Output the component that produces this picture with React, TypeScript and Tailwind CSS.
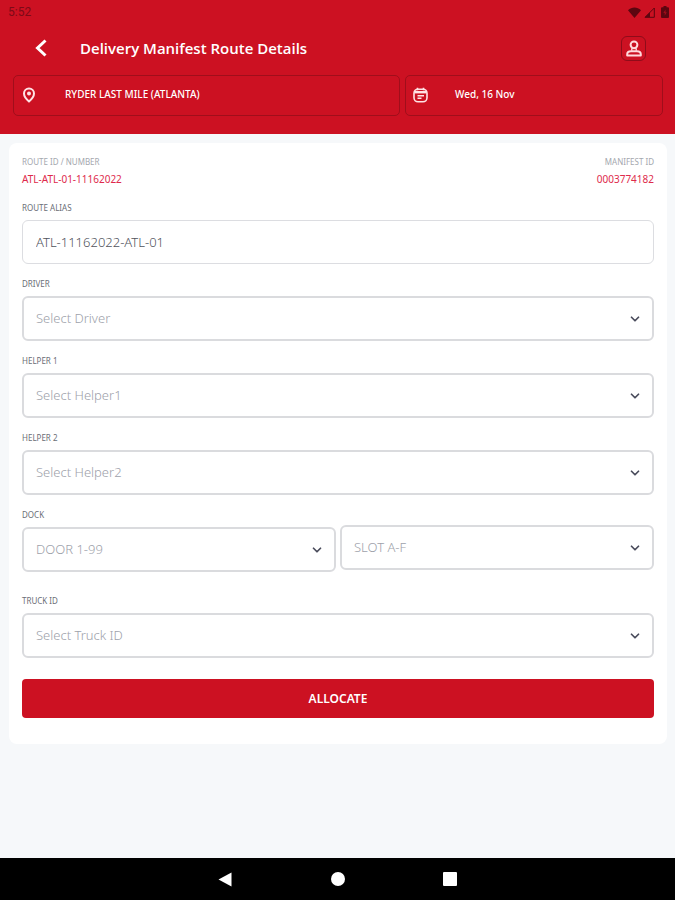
import { useState } from "react";
import { ChevronDown } from "lucide-react";

interface SelectBoxProps {
  id: string;
  placeholder: string;
  options: string[];
  label?: string;
}

const drivers = ["Driver 1", "Driver 2", "Driver 3"];
const helpers = ["Helper 1", "Helper 2", "Helper 3"];
const doors = Array.from({ length: 99 }, (_, i) => `DOOR ${i + 1}`);
const slots = ["SLOT A", "SLOT B", "SLOT C", "SLOT D", "SLOT E", "SLOT F"];
const trucks = ["Truck 1", "Truck 2"];

const labelClass = "block text-[8px] leading-4 text-[#6b6e76]";

function SelectBox({ id, placeholder, options, label }: SelectBoxProps) {
  const [value, setValue] = useState("");

  return (
    <div className="relative">
      <select
        id={id}
        aria-label={label}
        value={value}
        onChange={(e) => setValue(e.target.value)}
        className="block h-[45px] w-full appearance-none rounded-md border-2 border-[#dadbde] bg-white pr-10 pl-3 text-[13px] font-light text-[#9da1aa]"
      >
        <option value="">{placeholder}</option>
        {options.map((option) => (
          <option key={option} value={option}>
            {option}
          </option>
        ))}
      </select>
      <ChevronDown className="pointer-events-none absolute top-4 right-3 size-3.5 text-[#4a4c5c]" strokeWidth={3} />
    </div>
  );
}

function StatusBar() {
  return (
    <div className="flex h-6 items-center justify-between pr-[3px] pl-2 text-[#5c0610]">
      <span className="font-[Roboto,sans-serif] text-xs text-[#7d0a17]">5:52</span>
      <div className="flex items-center gap-[3px]">
        <svg width="13" height="11" viewBox="0 0 13 11" fill="currentColor">
          <path d="M0 3.2C3.8-.4 9.2-.4 13 3.2L6.5 11z" />
        </svg>
        <svg width="11" height="11" viewBox="0 0 11 11">
          <path d="M10.3 1v9.3H1z" fill="none" stroke="currentColor" strokeWidth="1" />
          <path d="M6 5.2v5.1H1z" fill="currentColor" />
        </svg>
        <svg width="14" height="12" viewBox="0 0 14 12">
          <path d="M5.5 0h3v1.2H10a1 1 0 0 1 1 1V11a1 1 0 0 1-1 1H4a1 1 0 0 1-1-1V2.2a1 1 0 0 1 1-1h1.5z" fill="currentColor" />
          <path d="M7.5 3.5 5.3 7h1.4v2.7L8.8 6.2H7.5z" fill="#a00d1b" />
        </svg>
      </div>
    </div>
  );
}

export default function App() {
  const [alias, setAlias] = useState("ATL-11162022-ATL-01");

  return (
    <div className="flex min-h-screen flex-col bg-[#f6f8fa] font-['Noto_Sans','Open_Sans',sans-serif]">
      <header className="bg-[#cc1122] pb-[18px] text-white">
        <StatusBar />

        <div className="mb-[3px] flex h-12 items-center pr-[29px] pl-[34px]">
          <button type="button" aria-label="Back" className="flex h-6 w-[46px] items-center">
            <svg width="14" height="18" viewBox="0 0 14 18" fill="none" stroke="currentColor" strokeWidth="3">
              <path d="M11.5 1.5 3.5 9l8 7.5" />
            </svg>
          </button>
          <h1 className="flex-1 font-['Open_Sans',sans-serif] text-[15px] leading-6 font-semibold">
            Delivery Manifest Route Details
          </h1>
          <button
            type="button"
            aria-label="Profile"
            className="flex size-[25px] items-center justify-center rounded-md border border-[#8f0c1a]"
          >
            <svg width="16" height="17" viewBox="0 0 16 17" fill="none" stroke="#ffd9dc" strokeWidth="2">
              <circle cx="8" cy="4.8" r="3.4" />
              <path d="M5.8 8.2v2.6M10.2 8.2v2.6" strokeWidth="1.4" />
              <path d="M1.2 15.5v-1.2c0-2 1.6-3.1 3.8-3.1h6c2.2 0 3.8 1.1 3.8 3.1v1.2z" strokeLinejoin="round" />
            </svg>
          </button>
        </div>

        <div className="grid grid-cols-[3fr_2fr] gap-[5px] pr-3 pl-[13px]">
          <button
            type="button"
            className="flex h-[41px] items-center rounded-[5px] border border-[#a00e1b] pb-0.5 pl-2 text-left text-[10px] font-medium"
          >
            <span className="w-[43px]">
              <svg width="14" height="16" viewBox="0 0 14 16" fill="none" stroke="#ffe3e5" strokeWidth="2">
                <path d="M7 14.5C4 12 2 9.4 2 6.6a5 5 0 0 1 10 0c0 2.8-2 5.4-5 7.9z" />
                <circle cx="7" cy="6.6" r="1" />
              </svg>
            </span>
            RYDER LAST MILE (ATLANTA)
          </button>
          <button
            type="button"
            className="flex h-[41px] items-center rounded-[5px] border border-[#a00e1b] pb-0.5 pl-[7px] text-left text-[10px] font-medium"
          >
            <span className="w-[42px]">
              <svg width="15" height="16" viewBox="0 0 15 16" fill="none" stroke="#ffe3e5" strokeWidth="1.6">
                <rect x="1" y="2.2" width="13" height="12.6" rx="4" />
                <path d="M1.5 5.2h12" strokeWidth="2.4" />
                <path d="M4.5.8v2.5M10.5.8v2.5M4.5 8.7H11M4.5 11.3h4" />
              </svg>
            </span>
            Wed, 16 Nov
          </button>
        </div>
      </header>

      <main className="flex-1 pt-[9px] pr-2 pl-[9px]">
        <form
          onSubmit={(e) => e.preventDefault()}
          className="flex flex-col gap-3 rounded-lg bg-white px-[13px] pt-[11px] pb-[26px]"
        >
          <div className="flex justify-between">
            <div>
              <p className="text-[8px] leading-4 text-[#a4a7ae]">ROUTE ID / NUMBER</p>
              <p className="text-[10px] leading-[18px] text-[#de2a4c]">ATL-ATL-01-11162022</p>
            </div>
            <div className="text-right">
              <p className="text-[8px] leading-4 text-[#a4a7ae]">MANIFEST ID</p>
              <p className="text-[10px] leading-[18px] text-[#de2a4c]">0003774182</p>
            </div>
          </div>

          <div className="space-y-1">
            <label htmlFor="alias" className={labelClass}>ROUTE ALIAS</label>
            <input
              id="alias"
              type="text"
              value={alias}
              onChange={(e) => setAlias(e.target.value)}
              className="block h-11 w-full rounded-md border border-[#dcdde1] px-[13px] text-[13px] font-light text-[#50535b]"
            />
          </div>

          <div className="space-y-1">
            <label htmlFor="driver" className={labelClass}>DRIVER</label>
            <SelectBox id="driver" placeholder="Select Driver" options={drivers} />
          </div>

          <div className="space-y-1">
            <label htmlFor="helper1" className={labelClass}>HELPER 1</label>
            <SelectBox id="helper1" placeholder="Select Helper1" options={helpers} />
          </div>

          <div className="space-y-1">
            <label htmlFor="helper2" className={labelClass}>HELPER 2</label>
            <SelectBox id="helper2" placeholder="Select Helper2" options={helpers} />
          </div>

          <div className="grid grid-cols-2 gap-1 pb-[9px]">
            <div className="space-y-1">
              <label htmlFor="door" className={labelClass}>DOCK</label>
              <SelectBox id="door" placeholder="DOOR 1-99" options={doors} />
            </div>
            <div className="pt-[18px]">
              <SelectBox id="slot" label="Slot" placeholder="SLOT A-F" options={slots} />
            </div>
          </div>

          <div className="space-y-1">
            <label htmlFor="truck" className={labelClass}>TRUCK ID</label>
            <SelectBox id="truck" placeholder="Select Truck ID" options={trucks} />
          </div>

          <button
            type="submit"
            className="mt-[9px] h-[39px] rounded bg-[#cc1122] text-xs font-semibold text-white"
          >
            ALLOCATE
          </button>
        </form>
      </main>

      {/* System navigation */}
      <nav className="flex h-[42px] items-center justify-center gap-[98px] bg-black">
        <button type="button" aria-label="Back">
          <svg width="15" height="15" viewBox="0 0 15 15" fill="white">
            <path d="M13.5.5v14L.5 7.5z" />
          </svg>
        </button>
        <button type="button" aria-label="Home" className="size-3.5 rounded-full bg-white" />
        <button type="button" aria-label="Recent apps" className="size-3.5 rounded-[1px] bg-white" />
      </nav>
    </div>
  );
}
